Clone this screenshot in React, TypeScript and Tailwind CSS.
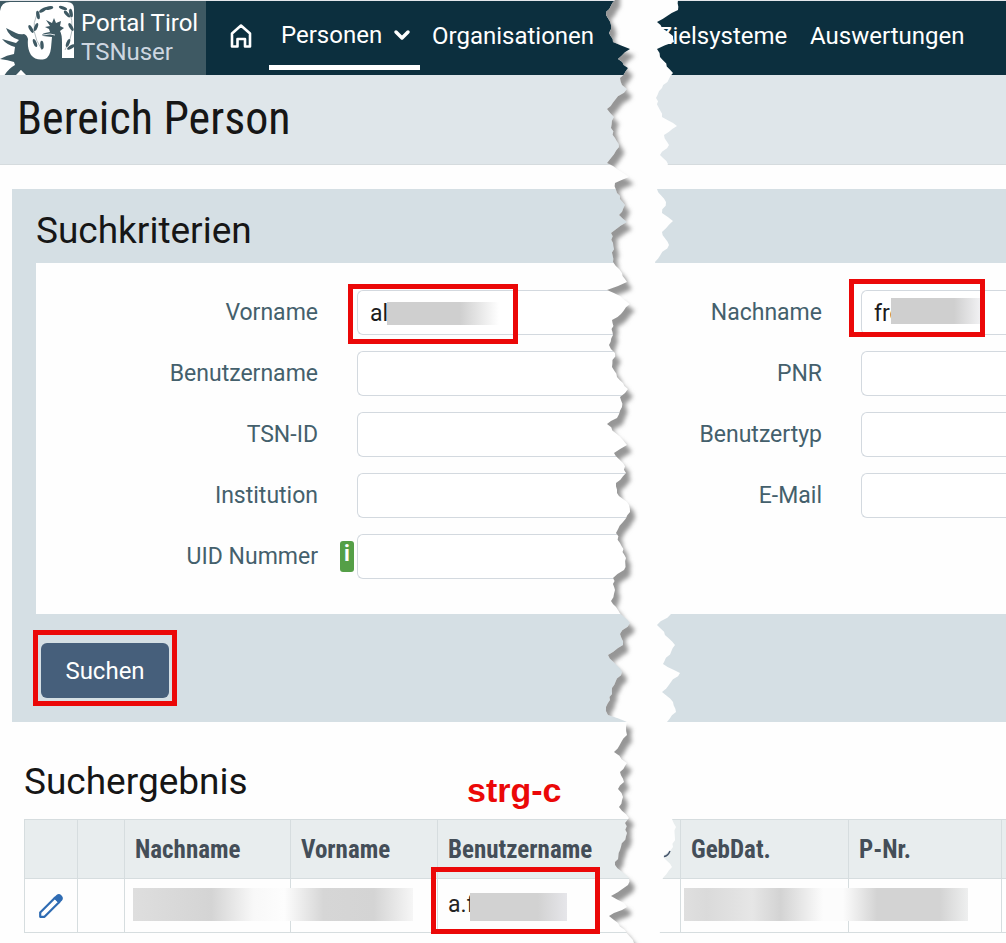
import React from "react";
import { ChevronDown } from "lucide-react";

type Point = [number, number];

// Left and right outline of the torn paper gap, from top to bottom
const leftEdge: Point[] = [
  [15, 0], [6, 12], [11, 25], [9, 33], [13, 42], [30, 49], [18, 59], [28, 68], [20, 78], [22, 85], [27, 89],
  [15, 100], [7, 109], [14, 117], [11, 128], [15, 138], [19, 147], [11, 158], [7, 163], [17, 169], [29, 177],
  [15, 183], [17, 193], [25, 205], [19, 215], [27, 222], [11, 233], [13, 243], [13, 262], [22, 273], [27, 282],
  [7, 290], [20, 296], [30, 304], [21, 314], [12, 320], [13, 335], [9, 345], [15, 353], [12, 367], [17, 377],
  [23, 383], [28, 389], [20, 397], [22, 407], [17, 418], [7, 424], [23, 440], [27, 445], [14, 453], [23, 463],
  [26, 473], [16, 483], [17, 493], [23, 499], [29, 505], [30, 512], [23, 522], [16, 533], [20, 543], [26, 558],
  [24, 570], [13, 578], [15, 590], [11, 601], [18, 610], [30, 623], [20, 634], [23, 645], [8, 655], [22, 672],
  [12, 688], [10, 700], [6, 707], [8, 715], [27, 722], [26, 727], [27, 735], [14, 752], [27, 763], [20, 772],
  [24, 782], [18, 789], [23, 797], [19, 807], [29, 818], [25, 823], [27, 833], [20, 850], [15, 865], [29, 878],
  [28, 885], [11, 896], [24, 903], [27, 907], [9, 916], [25, 930], [34, 943],
];

const rightEdge: Point[] = [
  [78, 0], [78, 10], [57, 22], [62, 28], [73, 36], [74, 42], [57, 49], [60, 57], [73, 73], [62, 88], [56, 98],
  [62, 117], [77, 126], [64, 135], [69, 145], [60, 155], [68, 164], [57, 189], [66, 202], [62, 213], [73, 221],
  [62, 232], [69, 245], [55, 262], [60, 300], [60, 600], [71, 614], [57, 625], [75, 645], [63, 664], [80, 673],
  [62, 692], [73, 702], [76, 712], [67, 722], [65, 800], [72, 819], [76, 827], [73, 847], [63, 857], [72, 867],
  [63, 878], [60, 943],
];

// Adds small deterministic notches between the outline points
const roughen = (points: Point[]) => {
  const out: Point[] = [];
  points.forEach(([x, y], i) => {
    out.push([x, y]);
    const next = points[i + 1];
    if (!next) return;
    const steps = Math.max(1, Math.floor((next[1] - y) / 3));
    for (let s = 1; s < steps; s++) {
      const t = s / steps;
      const notch = ((i * 7 + s * 5) % 4) - 1.5;
      out.push([x + (next[0] - x) * t + notch * 0.7, y + (next[1] - y) * t]);
    }
  });
  return out;
};

const left = roughen(leftEdge);
const right = roughen(rightEdge);
const gapPoints = [...left, ...[...right].reverse()].map((p) => p.join(",")).join(" ");
const paperPoints = [[-30, -20], [15, -20], ...left, [34, 970], [-30, 970]].map((p) => p.join(",")).join(" ");

const TornGap = () => (
  <svg aria-hidden="true" width="100" height="943" viewBox="0 0 100 943" className="pointer-events-none absolute left-[600px] top-0 z-20">
    <defs>
      <clipPath id="gap">
        <polygon points={gapPoints} />
      </clipPath>
      <filter id="soft" x="-20%" y="-5%" width="150%" height="110%">
        <feGaussianBlur stdDeviation="2" />
      </filter>
    </defs>
    <polygon points={gapPoints} fill="#fefefe" />
    <g clipPath="url(#gap)">
      <polygon points={paperPoints} fill="#969696" filter="url(#soft)" transform="translate(5 7)" />
    </g>
    <path d="M64 856.500Q68 856 70 851" fill="none" stroke="#44546a" strokeWidth="1.500" />
  </svg>
);

const leaves = [
  [38, 14, 80], [43, 9, 150], [49, 7, 170], [63, 7, 20], [67, 13, 50], [71, 12, 80], [31, 28, 60], [36, 26, 110],
  [71, 26, 60], [35, 42, 70], [42, 44, 85], [68, 42, 110], [71, 46, 150],
];

const EagleLogo = () => (
  <svg aria-hidden="true" width="75" height="75" viewBox="0 0 75 75" className="shrink-0">
    <path d="M0 10Q1 1 10 1H67Q74 1 74 8V57H62L50 62H28L26 69L21 69L27 75H0Z" fill="#fff" />
    <path
      fill="#3e5963"
      d="M6 27Q10 29 16 32Q20 34 24 33Q27 34 28 38Q27 48 31 54Q36 60 45 58Q50 56 51 47L52 36L43 35Q41 33 45 32L50 31L49 28L45 26L50 25L46 19L52 22L54 17L56 22L61 20L60 25L64 27L60 30Q62 33 62 42L62 57L75 57V75H26L21 69L16 75H4Q8 68 15 64L14 61Q8 59 0 58Q7 54 14 53L15 46Q7 44 2 38Q9 40 16 42L19 39Q9 36 6 27Z"
    />
    <path d="M21 69L27 75H15Z" fill="#fff" />
    <path d="M37 13Q29 30 42 49M69 9Q77 30 65 49" fill="none" stroke="#9eabb0" strokeWidth="0.800" />
    {leaves.map(([x, y, angle]) => (
      <ellipse key={`${x}-${y}`} cx={x} cy={y} rx="4.300" ry="1.700" fill="#3e5963" transform={`rotate(${angle} ${x} ${y})`} />
    ))}
    <path d="M43 34L50 33L55 34" fill="none" stroke="#dfe6e9" strokeWidth="1" />
  </svg>
);

const Header = () => (
  <header className="flex h-[75px] overflow-hidden whitespace-nowrap border-t border-gray-200 bg-[#0c2f3e] text-white">
    <a href="#start" className="flex w-[206px] shrink-0 items-center bg-[#3e5963]">
      <EagleLogo />
      <span className="ml-[6px] flex flex-col text-[24px] leading-[29px]">
        <span>Portal Tirol</span>
        <span className="text-[#cdd6e0]">TSNuser</span>
      </span>
    </a>
    <nav className="flex h-[69px] text-[24px]">
      <a href="#home" aria-label="Startseite" className="ml-6 mr-[15px] flex items-center">
        <svg aria-hidden="true" width="24" height="26" viewBox="0 0 24 26" fill="none" stroke="currentColor" strokeWidth="2.600" strokeLinejoin="round">
          <path d="M2 10.500L11 2.500L20 10.500V23.500H15V16H7.500V23.500H2Z" />
        </svg>
      </a>
      <a href="#personen" className="flex w-[151px] items-center gap-2 border-b-[5px] border-white pl-3 pt-1">
        Personen
        <ChevronDown className="size-6" strokeWidth={3.5} />
      </a>
      <a href="#organisationen" className="ml-3 flex w-[226px] items-center">Organisationen</a>
      <a href="#zielsysteme" className="flex w-[152px] items-center">Zielsysteme</a>
      <a href="#auswertungen" className="flex items-center">Auswertungen</a>
    </nav>
  </header>
);

type FieldProps = {
  id: string;
  label: string;
  value?: string;
  hint?: boolean;
  children?: React.ReactNode;
};

const Field = ({ id, label, value, hint, children }: FieldProps) => (
  <div className="flex items-center">
    <label htmlFor={id} className="w-[182px] shrink-0 pt-[2px] text-right text-[23px] text-[#44606c]">{label}</label>
    <div className="flex w-[39px] shrink-0 justify-end pr-[3px]">
      {hint && (
        <span className="flex h-[31px] w-[14px] justify-center rounded-[3px] bg-[#559f47] text-[22px] font-bold leading-[26px] text-white">i</span>
      )}
    </div>
    <div className="relative min-w-0 flex-1">
      <input
        id={id}
        defaultValue={value}
        className="block h-[45px] w-full rounded-l-md border border-r-0 border-[#d3d9df] bg-white px-3 pt-[2px] text-[23px] text-[#1c1c1c] outline-none"
      />
      {children}
    </div>
  </div>
);

const SearchPanel = () => (
  <section className="ml-3 mt-6 bg-[#d5dfe4] pb-4 pl-6 pt-4">
    <h2 className="text-[37px] leading-[52px] text-[#161616]">Suchkriterien</h2>
    <form className="mt-[6px]">
      <div className="flex h-[351px] bg-[#fefefe] pt-[27px]">
        <div className="flex w-[604px] shrink-0 flex-col gap-4 pl-[100px]">
          <Field id="vorname" label="Vorname" value="al">
            <span className="absolute left-[30px] top-3 h-[23px] w-[112px] bg-linear-to-r from-[#cfcfcf] from-65% to-white" />
            <span className="absolute -left-[9px] -top-[6px] h-[60px] w-[170px] border-5 border-[#eb0808]" />
          </Field>
          <Field id="benutzername" label="Benutzername" />
          <Field id="tsn-id" label="TSN-ID" />
          <Field id="institution" label="Institution" />
          <Field id="uid" label="UID Nummer" hint />
        </div>
        <div className="flex min-w-0 flex-1 flex-col gap-4">
          <Field id="nachname" label="Nachname" value="fre">
            <span className="absolute left-[30px] top-2 h-[26px] w-[90px] bg-linear-to-r from-[#cfcfcf] from-70% to-[#f2f2f4]" />
            <span className="absolute -left-3 -top-[11px] h-[58px] w-[136px] border-5 border-[#eb0808]" />
          </Field>
          <Field id="pnr" label="PNR" />
          <Field id="benutzertyp" label="Benutzertyp" />
          <Field id="email" label="E-Mail" />
        </div>
      </div>
      <div className="-ml-[3px] mt-4 flex h-[76px] w-[144px] border-5 border-[#eb0808] px-[3px] pt-2">
        <button type="button" className="h-[55px] flex-1 rounded-md bg-[#465f7b] text-[24px] text-white">Suchen</button>
      </div>
    </form>
  </section>
);

const headCell = "border border-[#d6dddf] px-[10px] pt-[2px] text-left";
const bodyCell = "relative border border-[#d6dddf] px-[10px]";

const Results = () => (
  <section className="relative pl-6 pt-[34px]">
    <h2 className="text-[37px] leading-[52px] text-[#161616]">Suchergebnis</h2>
    <p className="absolute left-[467px] top-[48px] font-['Liberation_Sans',Arial,sans-serif] text-[34px] font-bold leading-[40px] text-[#eb0808]">strg-c</p>
    <table className="mt-[11px] w-full table-fixed border-collapse">
      <colgroup>
        <col className="w-[53px]" />
        <col className="w-[47px]" />
        <col className="w-[166px]" />
        <col className="w-[147px]" />
        <col className="w-[243px]" />
        <col className="w-[168px]" />
        <col className="w-[153px]" />
        <col />
      </colgroup>
      <thead>
        <tr className="h-[59px] bg-[#e8edee] font-['Roboto_Condensed',Roboto,sans-serif] text-[25px] text-[#444e58]">
          <th className={headCell} />
          <th className={headCell} />
          <th className={headCell}>Nachname</th>
          <th className={headCell}>Vorname</th>
          <th className={headCell}>Benutzername</th>
          <th className={headCell}>GebDat.</th>
          <th className={headCell}>P-Nr.</th>
          <th className="border border-r-0 border-[#d6dddf]" />
        </tr>
      </thead>
      <tbody>
        <tr className="h-[54px] text-[23px] text-[#242424]">
          <td className="border border-[#d6dddf]">
            <button type="button" aria-label="Bearbeiten" className="flex w-full justify-center">
              <svg aria-hidden="true" width="26" height="26" viewBox="0 0 26 26">
                <path d="M2.200 19.500L17 4.700L21.300 9L6.500 23.800H2.200Z" fill="#fff" stroke="#2f6cb3" strokeWidth="2.200" strokeLinejoin="round" />
                <path d="M15.500 5L18.500 2Q21 0 23.500 2.500Q26 5 24 7.500L21 10.500Z" fill="#2f6cb3" />
              </svg>
            </button>
          </td>
          <td className={bodyCell} />
          <td className={bodyCell}>
            <span className="absolute left-2 top-[9px] z-10 h-[33px] w-[280px] bg-[linear-gradient(90deg,#dedede,#d4d4d4_28%,#f8f8f8_43%,#fdfdfd_54%,#d6d6d6_68%,#d4d4d4_86%,#f6f6f6)]" />
          </td>
          <td className={bodyCell} />
          <td className={bodyCell}>
            a.f
            <span className="absolute left-[32px] top-[14px] h-[28px] w-[97px] bg-linear-to-r from-[#d2d2d2] from-70% to-[#e6e6ea]" />
            <span className="absolute -left-[7px] -top-3 h-[67px] w-[169px] border-5 border-[#eb0808]" />
          </td>
          <td className={bodyCell}>
            <span className="absolute left-[3px] top-[9px] z-10 h-[33px] w-[284px] bg-[linear-gradient(90deg,#dfdfdf,#dadada_8%,#e6e6e6_24%,#d3d3d3_34%,#fcfcfc_49%,#fcfcfc_56%,#d3d3d3_68%,#d3d3d3_90%,#eeefef)]" />
          </td>
          <td className={bodyCell} />
          <td className="border border-r-0 border-[#d6dddf]" />
        </tr>
      </tbody>
    </table>
  </section>
);

export default function App() {
  return (
    <div className="relative overflow-hidden bg-[#fefefe] pb-[11px] font-[Roboto,sans-serif]">
      <Header />
      <div className="border-b border-[#d5dbde] bg-[#dfe6ea] pb-[19px] pl-[17px] pt-4">
        <h1 className="font-['Roboto_Condensed',Roboto,sans-serif] text-[46px] leading-[54px] text-[#161616]">Bereich Person</h1>
      </div>
      <main>
        <SearchPanel />
        <Results />
      </main>
      <TornGap />
    </div>
  );
}
